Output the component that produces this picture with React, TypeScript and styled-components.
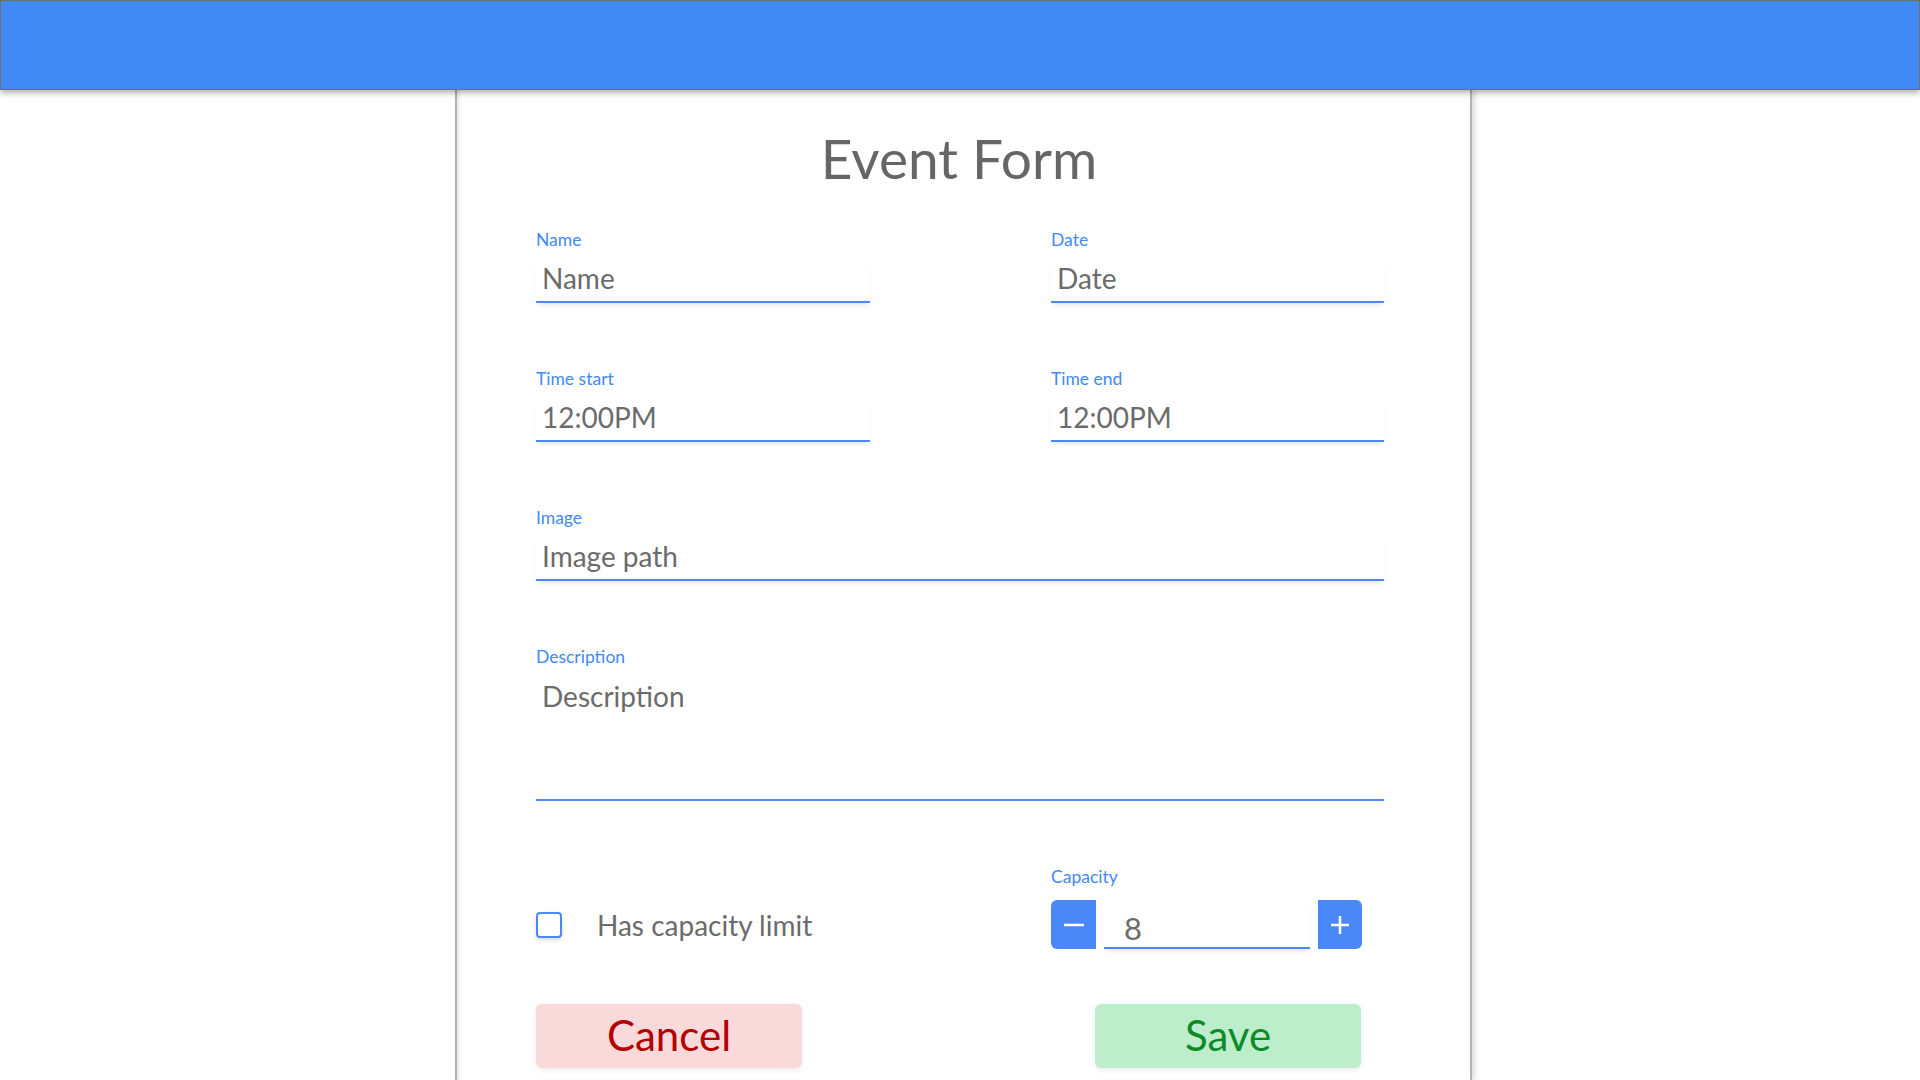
import React, { useState } from 'react'
import styled, { createGlobalStyle } from 'styled-components'

const GlobalStyle = createGlobalStyle`
  body {
    margin: 0;
    background: #ffffff;
    font-family: Lato, "Open Sans", sans-serif;
    overflow: hidden;
  }
`

const Header = styled.header`
  position: relative;
  z-index: 2;
  box-sizing: border-box;
  height: 90px;
  background: #4189f5;
  border: 1px solid #6f6f6f;
  box-shadow: 0 3px 6px rgba(0, 0, 0, 0.3);
`

const Panel = styled.main`
  box-sizing: border-box;
  width: 1017px;
  min-height: 990px;
  margin-left: 455px;
  padding: 35px 88px 0 79px;
  background: #ffffff;
  border-left: 2px solid #b3b3b3;
  border-right: 2px solid #b3b3b3;
  box-shadow: 3px 0 5px rgba(0, 0, 0, 0.14), inset 4px 0 5px -3px rgba(0, 0, 0, 0.14);
`

const Title = styled.h1`
  margin: 0 0 38px;
  font-size: 55px;
  line-height: 1.2;
  font-weight: 400;
  text-align: center;
  color: #666666;
`

const Grid = styled.div`
  display: grid;
  grid-template-columns: 334px 333px;
  justify-content: space-between;
  row-gap: 65px;
  width: 848px;
`

const Field = styled.div<{ wide?: boolean }>`
  display: flex;
  flex-direction: column;
  grid-column: ${({ wide }) => (wide ? '1 / -1' : 'auto')};
`

const Label = styled.label<{ gap?: number }>`
  margin-bottom: ${({ gap }) => gap ?? 11}px;
  font-size: 17.5px;
  line-height: 21px;
  color: #4189f5;
`

const TextInput = styled.input`
  box-sizing: border-box;
  width: 100%;
  height: 42px;
  padding: 0 6px 6px;
  border: none;
  border-bottom: 2px solid #4a8af5;
  outline: none;
  font-family: Lato, "Open Sans", sans-serif;
  font-size: 28px;
  line-height: 34px;
  color: #6b6b6b;
  background: transparent;
  box-shadow: 0 4px 5px -2px rgba(0, 0, 0, 0.1);
  &::placeholder {
    color: #6b6b6b;
  }
`

const TextArea = styled.textarea`
  box-sizing: border-box;
  width: 100%;
  height: 122px;
  margin-top: 1px;
  padding: 0 6px;
  border: none;
  border-bottom: 2px solid #4a8af5;
  outline: none;
  resize: none;
  font-family: Lato, "Open Sans", sans-serif;
  font-size: 28px;
  line-height: 34px;
  color: #6b6b6b;
  background: transparent;
  &::placeholder {
    color: #6b6b6b;
  }
`

const CheckRow = styled.label`
  display: flex;
  align-items: center;
  gap: 35px;
  height: 49px;
  align-self: end;
  font-size: 28px;
  color: #6b6b6b;
`

const CheckBox = styled.span<{ checked: boolean }>`
  box-sizing: border-box;
  width: 26px;
  height: 26px;
  border: 2px solid #4a8af5;
  border-radius: 4px;
  background: ${({ checked }) => (checked ? '#4a8af5' : '#ffffff')};
  box-shadow: 0 2px 4px rgba(0, 0, 0, 0.15);
`

const Stepper = styled.div`
  display: flex;
  align-items: flex-end;
  gap: 8px;
`

const StepButton = styled.button<{ side: 'left' | 'right' }>`
  display: flex;
  align-items: center;
  justify-content: center;
  width: ${({ side }) => (side === 'left' ? '45px' : '44px')};
  height: 49px;
  padding: 0;
  border: none;
  background: #4a88f7;
  border-radius: ${({ side }) => (side === 'left' ? '6px 0 0 6px' : '0 6px 6px 0')};
  cursor: pointer;
`

const NumberInput = styled(TextInput)`
  width: 206px;
  height: 49px;
  padding: 9px 0 0 20px;
  font-size: 31px;
  line-height: 33px;
`

const Actions = styled.div`
  display: flex;
  gap: 293px;
  margin-top: 55px;
`

const ActionButton = styled.button<{ tone: 'cancel' | 'save' }>`
  width: 266px;
  height: 64px;
  border: none;
  border-radius: 6px;
  font-family: Lato, "Open Sans", sans-serif;
  font-size: 42px;
  line-height: 1;
  padding: 0 0 2px;
  cursor: pointer;
  background: ${({ tone }) => (tone === 'cancel' ? '#f9d9d9' : '#bdeecb')};
  color: ${({ tone }) => (tone === 'cancel' ? '#b40000' : '#0e8b28')};
  box-shadow: 0 2px 6px rgba(0, 0, 0, 0.08);
`

const MinusIcon = () => (
  <svg width="20" height="20" viewBox="0 0 20 20">
    <line x1="0" y1="10" x2="20" y2="10" stroke="#fff" strokeWidth="2.5" />
  </svg>
)

const PlusIcon = () => (
  <svg width="20" height="20" viewBox="0 0 20 20">
    <line x1="1" y1="10" x2="19" y2="10" stroke="#fff" strokeWidth="2.5" />
    <line x1="10" y1="1" x2="10" y2="19" stroke="#fff" strokeWidth="2.5" />
  </svg>
)

export default function App() {
  const [capacity, setCapacity] = useState(8)
  const [limited, setLimited] = useState(false)

  return (
    <>
      <GlobalStyle />
      <Header />
      <Panel>
        <Title>Event Form</Title>
        <Grid>
          <Field>
            <Label>Name</Label>
            <TextInput placeholder="Name" />
          </Field>
          <Field>
            <Label>Date</Label>
            <TextInput placeholder="Date" />
          </Field>
          <Field>
            <Label>Time start</Label>
            <TextInput defaultValue="12:00PM" />
          </Field>
          <Field>
            <Label>Time end</Label>
            <TextInput defaultValue="12:00PM" />
          </Field>
          <Field wide>
            <Label>Image</Label>
            <TextInput placeholder="Image path" />
          </Field>
          <Field wide>
            <Label>Description</Label>
            <TextArea placeholder="Description" />
          </Field>
          <CheckRow onClick={() => setLimited(!limited)}>
            <CheckBox checked={limited} />
            <span>Has capacity limit</span>
          </CheckRow>
          <Field>
            <Label gap={13}>Capacity</Label>
            <Stepper>
              <StepButton side="left" onClick={() => setCapacity(Math.max(0, capacity - 1))}>
                <MinusIcon />
              </StepButton>
              <NumberInput value={capacity} onChange={(e) => setCapacity(Number(e.target.value) || 0)} />
              <StepButton side="right" onClick={() => setCapacity(capacity + 1)}>
                <PlusIcon />
              </StepButton>
            </Stepper>
          </Field>
        </Grid>
        <Actions>
          <ActionButton tone="cancel">Cancel</ActionButton>
          <ActionButton tone="save">Save</ActionButton>
        </Actions>
      </Panel>
    </>
  )
}
